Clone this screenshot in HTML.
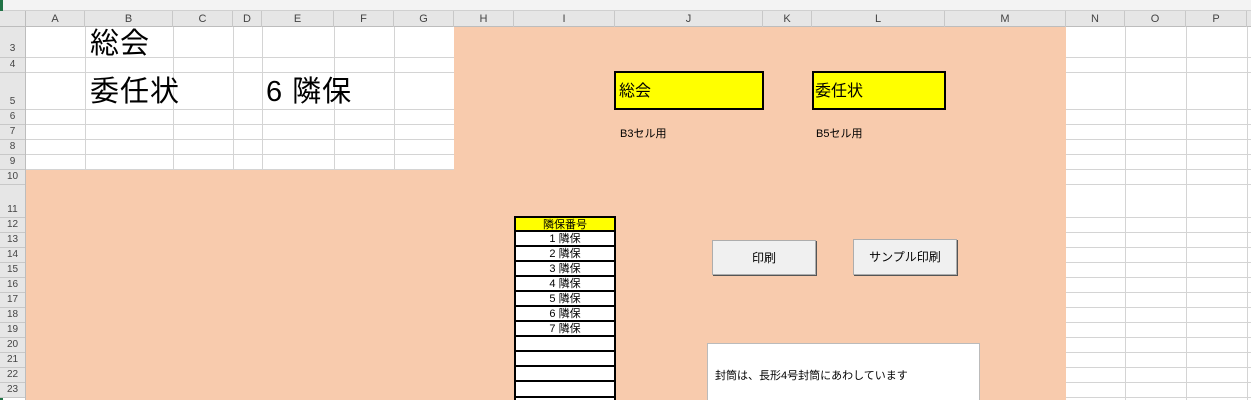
<!DOCTYPE html><html style="overflow:hidden;height:400px"><head><meta charset="utf-8"><style>
*{margin:0;padding:0;box-sizing:border-box}
body{width:1251px;height:400px;overflow:hidden;background:#fff;position:relative;font-family:"Liberation Sans","Noto Sans CJK JP",sans-serif}
.a{position:absolute}
.hl{position:absolute;background:#d4d4d4}
.ch{position:absolute;top:11px;height:16px;font-size:11px;color:#444;text-align:center;line-height:16px;border-right:1px solid #c8c8c8}
.rh{position:absolute;left:0;width:25px;font-size:10px;color:#444;text-align:center;border-bottom:1px solid #c8c8c8;background:#e6e6e6}
.peach{background:#f8cbad}
.tc{position:absolute;left:514px;width:102px;height:15px;border:2px solid #000;border-top:none;background:#fff;font-size:11px;text-align:center;line-height:14px}
.btn{position:absolute;background:#f0f0f0;border:1px solid #adadad;box-shadow:1px 1px 0 #555;font-size:12px;text-align:center;line-height:34px}
.big{position:absolute;font-size:29px;line-height:34px;letter-spacing:1px}
</style></head><body>
<div class="a" style="left:0;top:0;width:1251px;height:11px;background:#f3f3f3;border-bottom:1px solid #d0d0d0"></div>
<div class="a" style="left:0;top:0;width:3px;height:400px;background:#217346"></div>
<div class="a" style="left:0;top:11px;width:1251px;height:16px;background:#e6e6e6;border-bottom:1px solid #bdbdbd"></div>
<div class="ch" style="left:3px;width:23px"></div>
<div class="ch" style="left:26px;width:59px">A</div>
<div class="ch" style="left:85px;width:88px">B</div>
<div class="ch" style="left:173px;width:60px">C</div>
<div class="ch" style="left:233px;width:29px">D</div>
<div class="ch" style="left:262px;width:72px">E</div>
<div class="ch" style="left:334px;width:60px">F</div>
<div class="ch" style="left:394px;width:60px">G</div>
<div class="ch" style="left:454px;width:60px">H</div>
<div class="ch" style="left:514px;width:101px">I</div>
<div class="ch" style="left:615px;width:148px">J</div>
<div class="ch" style="left:763px;width:49px">K</div>
<div class="ch" style="left:812px;width:133px">L</div>
<div class="ch" style="left:945px;width:121px">M</div>
<div class="ch" style="left:1066px;width:59px">N</div>
<div class="ch" style="left:1125px;width:61px">O</div>
<div class="ch" style="left:1186px;width:61px">P</div>
<div class="hl" style="left:85px;top:27px;width:1px;height:142px"></div>
<div class="hl" style="left:173px;top:27px;width:1px;height:142px"></div>
<div class="hl" style="left:233px;top:27px;width:1px;height:142px"></div>
<div class="hl" style="left:262px;top:27px;width:1px;height:142px"></div>
<div class="hl" style="left:334px;top:27px;width:1px;height:142px"></div>
<div class="hl" style="left:394px;top:27px;width:1px;height:142px"></div>
<div class="hl" style="left:1125px;top:27px;width:1px;height:373px"></div>
<div class="hl" style="left:1186px;top:27px;width:1px;height:373px"></div>
<div class="hl" style="left:1247px;top:27px;width:1px;height:373px"></div>
<div class="hl" style="left:25px;top:57px;width:1226px;height:1px"></div>
<div class="hl" style="left:25px;top:72px;width:1226px;height:1px"></div>
<div class="hl" style="left:25px;top:109px;width:1226px;height:1px"></div>
<div class="hl" style="left:25px;top:124px;width:1226px;height:1px"></div>
<div class="hl" style="left:25px;top:139px;width:1226px;height:1px"></div>
<div class="hl" style="left:25px;top:154px;width:1226px;height:1px"></div>
<div class="hl" style="left:25px;top:169px;width:1226px;height:1px"></div>
<div class="hl" style="left:1066px;top:184px;width:185px;height:1px"></div>
<div class="hl" style="left:1066px;top:217px;width:185px;height:1px"></div>
<div class="hl" style="left:1066px;top:232px;width:185px;height:1px"></div>
<div class="hl" style="left:1066px;top:247px;width:185px;height:1px"></div>
<div class="hl" style="left:1066px;top:262px;width:185px;height:1px"></div>
<div class="hl" style="left:1066px;top:277px;width:185px;height:1px"></div>
<div class="hl" style="left:1066px;top:292px;width:185px;height:1px"></div>
<div class="hl" style="left:1066px;top:307px;width:185px;height:1px"></div>
<div class="hl" style="left:1066px;top:322px;width:185px;height:1px"></div>
<div class="hl" style="left:1066px;top:337px;width:185px;height:1px"></div>
<div class="hl" style="left:1066px;top:352px;width:185px;height:1px"></div>
<div class="hl" style="left:1066px;top:367px;width:185px;height:1px"></div>
<div class="hl" style="left:1066px;top:382px;width:185px;height:1px"></div>
<div class="hl" style="left:1066px;top:397px;width:185px;height:1px"></div>
<div class="a peach" style="left:454px;top:27px;width:612px;height:373px"></div>
<div class="a peach" style="left:26px;top:170px;width:428px;height:230px"></div>
<div class="rh" style="top:27px;height:31px;line-height:44px">3</div>
<div class="rh" style="top:58px;height:15px;line-height:14px">4</div>
<div class="rh" style="top:73px;height:37px;line-height:58px">5</div>
<div class="rh" style="top:110px;height:15px;line-height:14px">6</div>
<div class="rh" style="top:125px;height:15px;line-height:14px">7</div>
<div class="rh" style="top:140px;height:15px;line-height:14px">8</div>
<div class="rh" style="top:155px;height:15px;line-height:14px">9</div>
<div class="rh" style="top:170px;height:15px;line-height:14px">10</div>
<div class="rh" style="top:185px;height:33px;line-height:50px">11</div>
<div class="rh" style="top:218px;height:15px;line-height:14px">12</div>
<div class="rh" style="top:233px;height:15px;line-height:14px">13</div>
<div class="rh" style="top:248px;height:15px;line-height:14px">14</div>
<div class="rh" style="top:263px;height:15px;line-height:14px">15</div>
<div class="rh" style="top:278px;height:15px;line-height:14px">16</div>
<div class="rh" style="top:293px;height:15px;line-height:14px">17</div>
<div class="rh" style="top:308px;height:15px;line-height:14px">18</div>
<div class="rh" style="top:323px;height:15px;line-height:14px">19</div>
<div class="rh" style="top:338px;height:15px;line-height:14px">20</div>
<div class="rh" style="top:353px;height:15px;line-height:14px">21</div>
<div class="rh" style="top:368px;height:15px;line-height:14px">22</div>
<div class="rh" style="top:383px;height:15px;line-height:14px">23</div>
<div class="a" style="left:25px;top:11px;width:1px;height:389px;background:#bdbdbd"></div>
<div class="big" style="left:90px;top:27px">総会</div>
<div class="big" style="left:90px;top:75px">委任状</div>
<div class="big" style="left:266px;top:75px">6 隣保</div>
<div class="a" style="left:614px;top:71px;width:150px;height:39px;background:#ff0;border:2px solid #000;font-size:16px;line-height:37px;padding-left:3px">総会</div>
<div class="a" style="left:812px;top:71px;width:134px;height:39px;background:#ff0;border:2px solid #000;font-size:16px;line-height:37px;padding-left:1px">委任状</div>
<div class="a" style="left:620px;top:125px;font-size:11px">B3セル用</div>
<div class="a" style="left:816px;top:125px;font-size:11px">B5セル用</div>
<div class="tc" style="top:216px;height:16px;border-top:2px solid #000;background:#ff0">隣保番号</div>
<div class="tc" style="top:232px">1 隣保</div>
<div class="tc" style="top:247px">2 隣保</div>
<div class="tc" style="top:262px">3 隣保</div>
<div class="tc" style="top:277px">4 隣保</div>
<div class="tc" style="top:292px">5 隣保</div>
<div class="tc" style="top:307px">6 隣保</div>
<div class="tc" style="top:322px">7 隣保</div>
<div class="tc" style="top:337px"></div>
<div class="tc" style="top:352px"></div>
<div class="tc" style="top:367px"></div>
<div class="tc" style="top:382px;height:18px;border-bottom:none"></div>
<div class="a" style="left:514px;top:396px;width:102px;height:2px;background:#000"></div>
<div class="btn" style="left:712px;top:240px;width:104px;height:35px">印刷</div>
<div class="btn" style="left:853px;top:239px;width:104px;height:36px">サンプル印刷</div>
<div class="a" style="left:707px;top:343px;width:273px;height:57px;background:#fff;border:1px solid #bbb;border-bottom:none;font-size:11px;padding:23px 0 0 7px">封筒は、長形4号封筒にあわしています</div>
</body></html>
